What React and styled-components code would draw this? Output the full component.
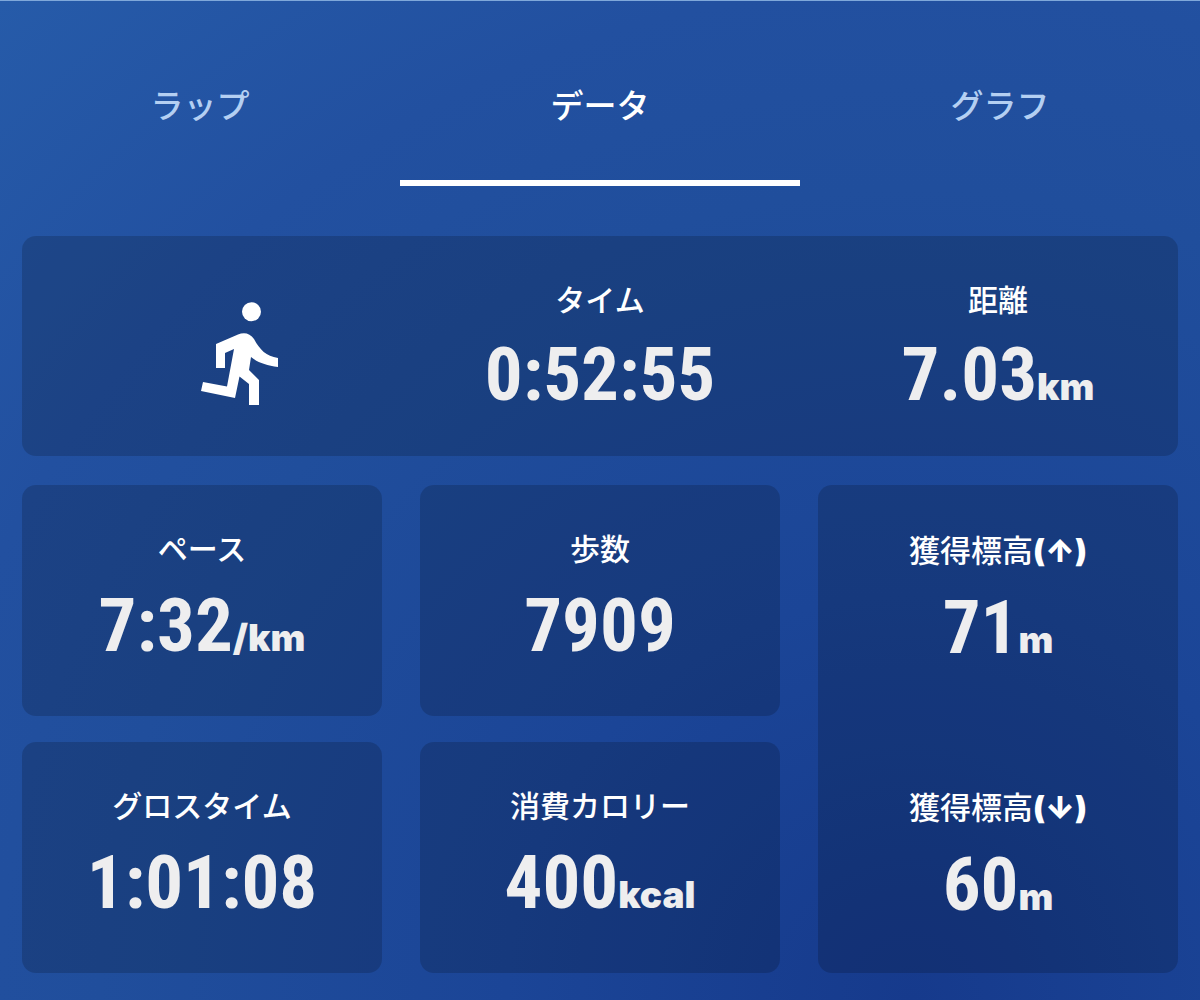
import React, { useState } from "react";
import styled, { createGlobalStyle } from "styled-components";

const GlobalStyle = createGlobalStyle`
  *, *::before, *::after { box-sizing: border-box; }
  html { background: #173a8c; }
  body {
    margin: 0;
    font-family: "Noto Sans CJK JP", sans-serif;
    color: #fff;
  }
`;

const Page = styled.div`
  min-height: 100vh;
  border-top: 1px solid #7fa8da;
  background: radial-gradient(circle at 76% 100%, #163a8c 0%, #1b4597 30%, #204e9c 60%, #2250a0 75%, #265ba9 100%);
`;

const TabBar = styled.div`
  display: grid;
  grid-template-columns: repeat(3, 1fr);
`;

const Tab = styled.button`
  display: flex;
  justify-content: center;
  align-items: flex-start;
  height: 185px;
  padding: 79px 0 0;
  border: 0;
  border-bottom: 6px solid ${(p) => (p.$active ? "#fff" : "transparent")};
  background: none;
  color: ${(p) => (p.$active ? "#fff" : "#b4cff2")};
  font-family: inherit;
  font-size: 33px;
  font-weight: 500;
  line-height: 48px;
  cursor: pointer;
`;

const Content = styled.main`
  display: grid;
  grid-template-columns: repeat(3, minmax(0, 1fr));
  column-gap: 38px;
  row-gap: 26px;
  padding: 50px 22px 28px;
`;

const Card = styled.section`
  background: rgba(0, 0, 0, 0.17);
  border-radius: 14px;
`;

const Summary = styled(Card)`
  grid-column: 1 / -1;
  display: grid;
  grid-template-columns: subgrid;
  margin-bottom: 3px;
`;

const Elevation = styled(Card)`
  grid-column: 3;
  grid-row: 2 / span 2;
  display: grid;
  grid-template-rows: subgrid;
`;

const IconCell = styled.div`
  display: flex;
  align-items: center;
  justify-content: center;
  padding: 16px 0 0 76px;
`;

const MetricBox = styled.div`
  min-height: ${(p) => (p.$compact ? 220 : 231)}px;
  padding-top: 38px;
  text-align: center;
`;

const Label = styled.h2`
  margin: 0;
  padding-top: ${(p) => (p.$mixed ? 2 : 0)}px;
  font-size: ${(p) => (p.$mixed ? 31 : 30)}px;
  font-weight: 500;
  line-height: 48px;
`;

const Bold = styled.span`
  font-family: Inter, "Noto Sans CJK JP", sans-serif;
  font-weight: 900;
`;

const Value = styled.p`
  margin: 0;
  padding-top: ${(p) => (p.$mixed || p.$compact ? 8 : 10)}px;
  font-family: "Roboto Condensed", "Liberation Sans Narrow", Roboto, sans-serif;
  font-size: 75px;
  font-weight: 700;
  line-height: 88px;
  color: #eeeeef;
`;

const Unit = styled.span`
  font-family: Inter, sans-serif;
  font-size: 37px;
  font-weight: 900;
`;

const RunnerIcon = () => (
  <svg width="78" height="104" viewBox="0 0 78 104" fill="#fff" role="img" aria-label="ランニング">
    <circle cx="50.5" cy="9.7" r="9.5" />
    <path d="M15 42 L37 32.5 C43 30 49 31 53 37 C59 48 65 54 77 56 V65 C65 63.5 56 60 50 55 L48 68 L58 78 V103 H48 V82 L38.5 74.5 L34 96 L0 89 L2 80 L26 84.5 L33 47 L24 51 V66 H15 Z" />
  </svg>
);

const Metric = ({ label, arrow, value, unit, compact }) => (
  <MetricBox $compact={compact}>
    <Label $mixed={Boolean(arrow)}>
      {label}
      {arrow && <Bold>({arrow})</Bold>}
    </Label>
    <Value $mixed={Boolean(arrow)} $compact={compact}>
      {value}
      {unit && <Unit>{unit}</Unit>}
    </Value>
  </MetricBox>
);

const tabs = ["ラップ", "データ", "グラフ"];

export default function App() {
  const [active, setActive] = useState("データ");
  return (
    <Page>
      <GlobalStyle />
      <TabBar role="tablist">
        {tabs.map((t) => (
          <Tab key={t} role="tab" aria-selected={t === active} $active={t === active} onClick={() => setActive(t)}>
            {t}
          </Tab>
        ))}
      </TabBar>
      <Content>
        <Summary>
          <IconCell>
            <RunnerIcon />
          </IconCell>
          <Metric compact label="タイム" value="0:52:55" />
          <Metric compact label="距離" value="7.03" unit="km" />
        </Summary>
        <Card>
          <Metric label="ペース" value="7:32" unit="/km" />
        </Card>
        <Card>
          <Metric label="歩数" value="7909" />
        </Card>
        <Elevation>
          <Metric label="獲得標高" arrow="↑" value="71" unit="m" />
          <Metric label="獲得標高" arrow="↓" value="60" unit="m" />
        </Elevation>
        <Card>
          <Metric label="グロスタイム" value="1:01:08" />
        </Card>
        <Card>
          <Metric label="消費カロリー" value="400" unit="kcal" />
        </Card>
      </Content>
    </Page>
  );
}
